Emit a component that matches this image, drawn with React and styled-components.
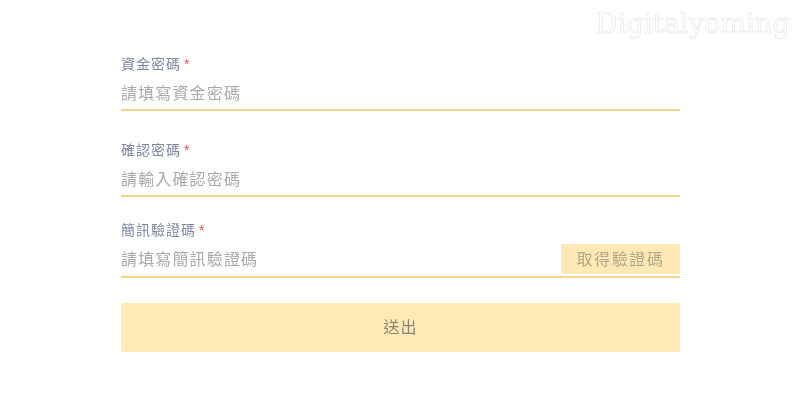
import styled, { createGlobalStyle } from "styled-components";

const GlobalStyle = createGlobalStyle`
  html, body {
    margin: 0;
    padding: 0;
    background: #fff;
    font-family: "Liberation Sans", "Noto Sans CJK TC", sans-serif;
  }
`;

const Page = styled.div`
  position: relative;
  width: 800px;
  height: 400px;
  overflow: hidden;
  padding: 54px 120px 0 121px;
  box-sizing: border-box;
  filter: blur(0.4px);
`;

const Watermark = styled.div`
  position: absolute;
  top: 8px;
  right: 10px;
  font-family: "DejaVu Serif", serif;
  font-size: 27px;
  letter-spacing: 0.15px;
  color: #fff;
  -webkit-text-stroke: 0.6px #e4e4e4;
`;

const Field = styled.div`
  margin-bottom: ${props => props.$gap}px;
`;

const Label = styled.div`
  font-size: 14px;
  line-height: 20px;
  letter-spacing: 1px;
  color: #7f88a3;
`;

const Star = styled.span`
  color: #ef4d4d;
  margin-left: 3px;
`;

const Row = styled.div`
  display: flex;
  align-items: center;
  justify-content: space-between;
  height: ${props => props.$height}px;
  border-bottom: 2px solid #f6d48a;
`;

const Placeholder = styled.div`
  font-size: 16px;
  letter-spacing: 1.15px;
  color: #aaaaaa;
`;

const CodeButton = styled.div`
  width: 119px;
  height: 30px;
  margin-top: 2px;
  padding-bottom: 2px;
  box-sizing: border-box;
  display: flex;
  align-items: center;
  justify-content: center;
  background: #fee9b4;
  border-radius: 2px;
  font-size: 16px;
  letter-spacing: 1.6px;
  color: #b3a98a;
`;

const Submit = styled.div`
  height: 49px;
  padding-bottom: 3px;
  box-sizing: border-box;
  display: flex;
  align-items: center;
  justify-content: center;
  background: #ffe9b5;
  border-radius: 2px;
  font-size: 16px;
  letter-spacing: 1px;
  color: #8a8575;
`;

export default function App() {
  return (
    <Page>
      <GlobalStyle />
      <Watermark>Digitalyoming</Watermark>
      <Field $gap={29}>
        <Label>資金密碼<Star>*</Star></Label>
        <Row $height={35}>
          <Placeholder>請填寫資金密碼</Placeholder>
        </Row>
      </Field>
      <Field $gap={23}>
        <Label>確認密碼<Star>*</Star></Label>
        <Row $height={35}>
          <Placeholder>請輸入確認密碼</Placeholder>
        </Row>
      </Field>
      <Field $gap={25}>
        <Label>簡訊驗證碼<Star>*</Star></Label>
        <Row $height={36}>
          <Placeholder>請填寫簡訊驗證碼</Placeholder>
          <CodeButton>取得驗證碼</CodeButton>
        </Row>
      </Field>
      <Submit>送出</Submit>
    </Page>
  );
}
